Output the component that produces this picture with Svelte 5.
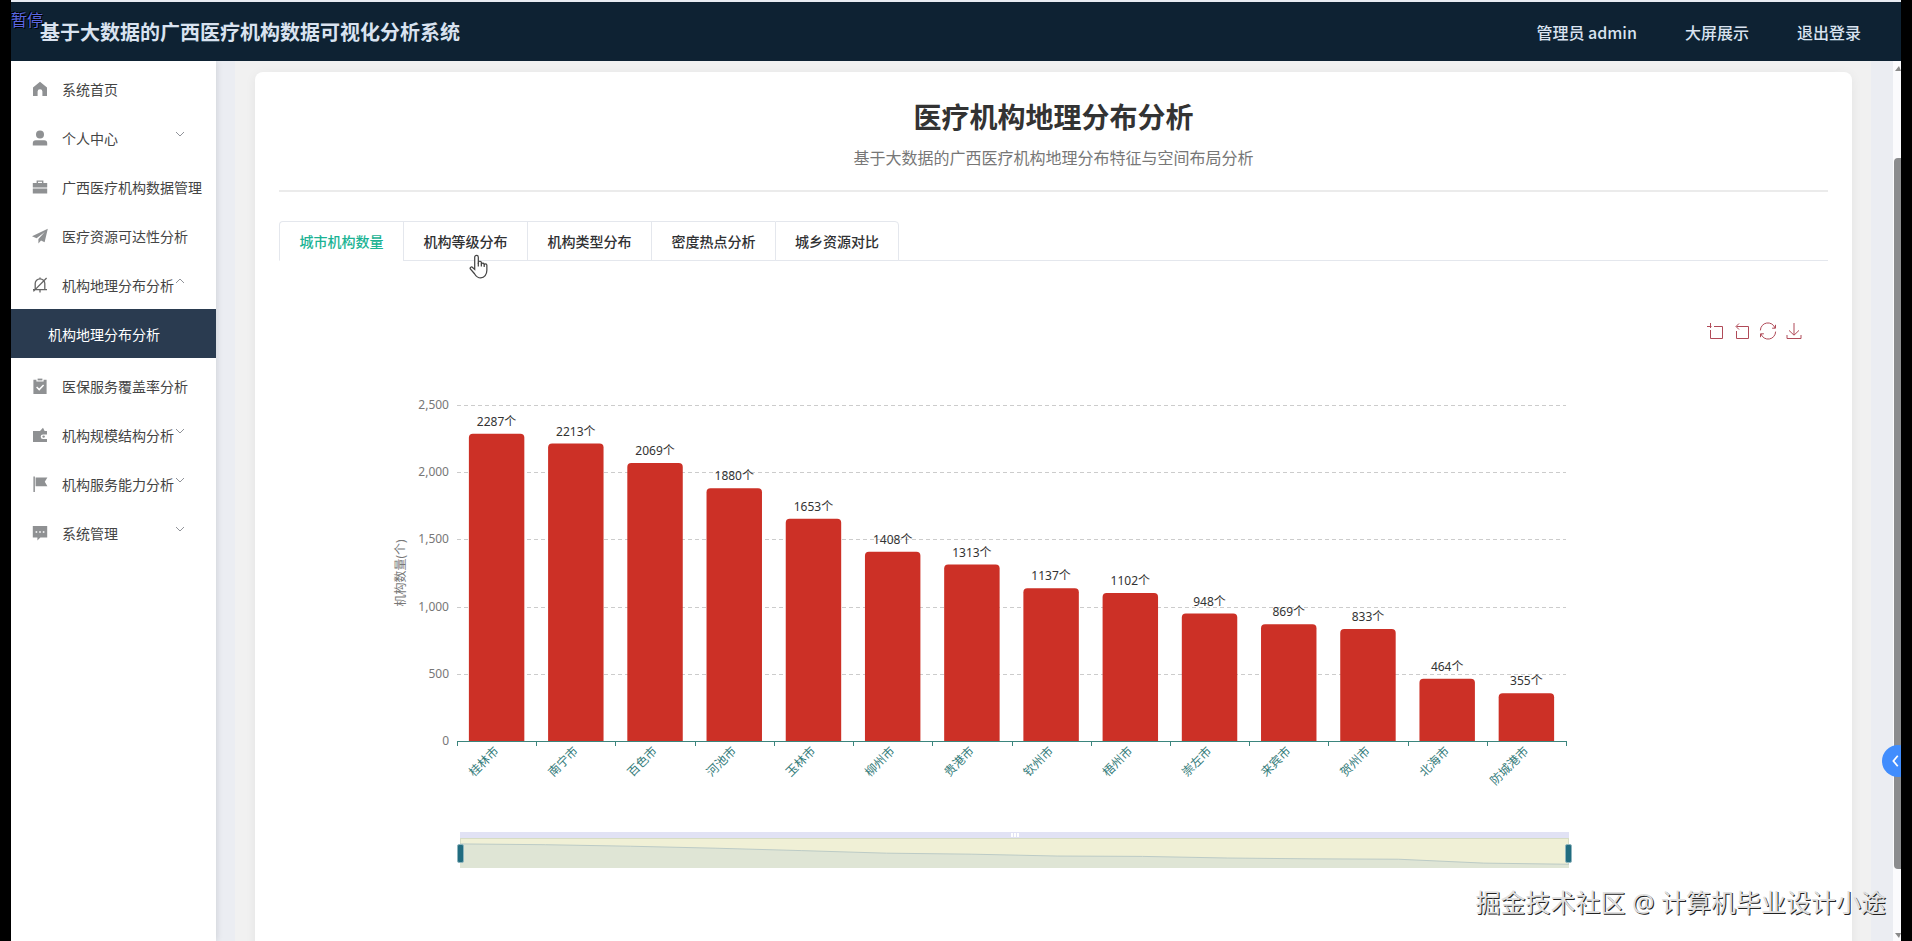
<script lang="ts">
	type MenuItem = {
		label: string;
		icon: string;
		arrow?: 'up' | 'down';
		children?: string[];
	};

	const menu: MenuItem[] = [
		{ label: '系统首页', icon: 'home' },
		{ label: '个人中心', icon: 'user', arrow: 'down' },
		{ label: '广西医疗机构数据管理', icon: 'case' },
		{ label: '医疗资源可达性分析', icon: 'plane' },
		{ label: '机构地理分布分析', icon: 'bell', arrow: 'up', children: ['机构地理分布分析'] },
		{ label: '医保服务覆盖率分析', icon: 'claim' },
		{ label: '机构规模结构分析', icon: 'wallet', arrow: 'down' },
		{ label: '机构服务能力分析', icon: 'flag', arrow: 'down' },
		{ label: '系统管理', icon: 'chat', arrow: 'down' }
	];

	const tabs = ['城市机构数量', '机构等级分布', '机构类型分布', '密度热点分析', '城乡资源对比'];
	let activeTab = $state(0);

	const cities = [
		{ name: '桂林市', count: 2287 },
		{ name: '南宁市', count: 2213 },
		{ name: '百色市', count: 2069 },
		{ name: '河池市', count: 1880 },
		{ name: '玉林市', count: 1653 },
		{ name: '柳州市', count: 1408 },
		{ name: '贵港市', count: 1313 },
		{ name: '钦州市', count: 1137 },
		{ name: '梧州市', count: 1102 },
		{ name: '崇左市', count: 948 },
		{ name: '来宾市', count: 869 },
		{ name: '贺州市', count: 833 },
		{ name: '北海市', count: 464 },
		{ name: '防城港市', count: 355 }
	];

	const ticks = [0, 500, 1000, 1500, 2000, 2500];
	const maxValue = 2500;
	const grid = { left: 178, right: 262, top: 44, height: 336 };
	const baseline = grid.top + grid.height;

	let chartWidth = $state(1549);
	const plotWidth = $derived(chartWidth - grid.left - grid.right);
	const step = $derived(plotWidth / cities.length);
	const barWidth = $derived(step * 0.7);

	const yOf = (v: number) => baseline - (v / maxValue) * grid.height;

	function barPath(cx: number, value: number) {
		const x = cx - barWidth / 2;
		const y = yOf(value);
		const r = 4;
		return `M${x} ${baseline}V${y + r}a${r} ${r} 0 0 1 ${r} ${-r}h${barWidth - 2 * r}a${r} ${r} 0 0 1 ${r} ${r}V${baseline}z`;
	}

	// shadow of the data inside the zoom slider
	const zoomHeight = 30;
	const shadowLine = $derived(
		cities
			.map((c, i) => {
				const x = (i / (cities.length - 1)) * plotWidth;
				const y = zoomHeight - (c.count / 2850) * zoomHeight;
				return `${x},${y}`;
			})
			.join(' ')
	);

	let zoomStart = $state(0);
	let zoomEnd = $state(100);
</script>

<svelte:head>
	<title>基于大数据的广西医疗机构数据可视化分析系统</title>
</svelte:head>

{#snippet menuIcon(name: string)}
	<svg class="menu-icon" viewBox="0 0 16 16" aria-hidden="true">
		{#if name === 'home'}
			<path d="M8 .8 1 6.4V15h4.6v-4.4a2.4 2.4 0 0 1 4.8 0V15H15V6.4z" />
		{:else if name === 'user'}
			<circle cx="8" cy="4.6" r="4" />
			<path d="M.8 15.4v-2.2a3 3 0 0 1 3-3h8.4a3 3 0 0 1 3 3v2.2z" />
		{:else if name === 'case'}
			<path d="M4.6 4V1.4h6.8V4h3.8v4.4H.8V4zm1.4 0h4V2.8H6zM.8 9.6h14.4v5H.8z" />
		{:else if name === 'plane'}
			<path d="M15.8.8 0 8.2l4.6 2L12.8 4l-6.4 7v4.4l2.6-3 3.6 1.8z" />
		{:else if name === 'bell'}
			<path
				class="line"
				d="M3.2 12V6.6a4.8 4.8 0 0 1 9.6 0V12M1 12.6h14M8 13v2.4M8 .4v1.4M14.6 1 1.4 14.4"
			/>
		{:else if name === 'claim'}
			<path d="M1.4 1.8h3V3.4h7.2V1.8h3V16H1.4z" />
			<path d="M5.6.6h4.8v1.8H5.6z" />
			<path class="cut" d="m4.6 9 2.6 2.6L11.6 7" />
		{:else if name === 'wallet'}
			<path d="M1 4h7l3-3.2 1.6 3.2H15v3.4h-4a2.2 2.2 0 0 0 0 4.6h4v3H1z" />
			<circle cx="11.6" cy="9.6" r="1.2" />
		{:else if name === 'flag'}
			<path d="M1.4.4h1.5V16H1.4zM3.6 1.6h11.8l-2.6 4.2 2.6 4.4H3.6z" />
		{:else if name === 'chat'}
			<path d="M.8 1h14.4v11.6H8.4l-3 2.8v-2.8H.8z" />
			<path class="cut" d="M3.6 7h1.6M7.2 7h1.6M10.8 7h1.6" />
		{/if}
	</svg>
{/snippet}

<div class="screen">
	<header class="topbar">
		<span class="osd">暂停</span>
		<h1 class="brand">基于大数据的广西医疗机构数据可视化分析系统</h1>
		<nav class="topnav">
			<a href="#profile">管理员 admin</a>
			<a href="#screen">大屏展示</a>
			<a href="#logout">退出登录</a>
		</nav>
	</header>

	<div class="body">
		<nav class="sidebar">
			<ul>
				{#each menu as item (item.label)}
					<li>
						<a class="menu-item" href="#menu">
							{@render menuIcon(item.icon)}
							<span>{item.label}</span>
							{#if item.arrow}
								<svg class="arrow" class:up={item.arrow === 'up'} viewBox="0 0 10 10" aria-hidden="true">
									<path d="m1 3 4 4 4-4" />
								</svg>
							{/if}
						</a>
						{#if item.children}
							<ul class="submenu">
								{#each item.children as child (child)}
									<li><a class="submenu-item" href="#geo">{child}</a></li>
								{/each}
							</ul>
						{/if}
					</li>
				{/each}
			</ul>
		</nav>

		<main class="content">
			<div class="panel">
				<section class="card">
					<div class="card-head">
						<h2>医疗机构地理分布分析</h2>
						<p>基于大数据的广西医疗机构地理分布特征与空间布局分析</p>
					</div>

					<div class="tabs" role="tablist">
						{#each tabs as tab, i (tab)}
							<button
								class="tab"
								class:active={i === activeTab}
								role="tab"
								aria-selected={i === activeTab}
								onclick={() => (activeTab = i)}
							>
								{tab}
							</button>
						{/each}
					</div>

					<div class="toolbox">
						<button aria-label="区域缩放">
							<svg viewBox="0 0 16 16"><path d="M-1 3.500h4.500M2.500 0v5M2.500 7v8.500h12V3.500H6" /></svg>
						</button>
						<button aria-label="区域缩放还原">
							<svg viewBox="0 0 16 16"><path d="M5 .5 2 3.500l3 3M2.500 3.500h12v12h-12V8" /></svg>
						</button>
						<button aria-label="还原">
							<svg viewBox="0 0 16 16">
								<path d="M.4 7.400A7.500 7.500 0 0 1 15 5M15.600 8.600A7.500 7.500 0 0 1 1 11M15.500 1.800V5.200h-3.400M.5 14.200v-3.400h3.400" />
							</svg>
						</button>
						<button aria-label="保存为图片">
							<svg viewBox="0 0 16 16"><path d="M8 0v12M3 7.4l5 4.8 5-4.8M1 12v3.500h14V12" /></svg>
						</button>
					</div>

					<div class="chart" bind:clientWidth={chartWidth}>
						<svg class="plot" width={chartWidth} height="460" role="img" aria-label="城市机构数量">
							{#each ticks as t (t)}
								{#if t > 0}
									<line
										class="split"
										x1={grid.left}
										x2={chartWidth - grid.right}
										y1={Math.round(yOf(t)) + 0.5}
										y2={Math.round(yOf(t)) + 0.5}
									/>
								{/if}
								<text class="y-label" x={grid.left - 8} y={yOf(t) + 4}>{t.toLocaleString('en-US')}</text>
							{/each}

							<text class="axis-name" transform="translate(126 {grid.top + grid.height / 2}) rotate(-90)">
								机构数量(个)
							</text>

							{#each cities as c, i (c.name)}
								{@const cx = grid.left + step * (i + 0.5)}
								<path class="bar" d={barPath(cx, c.count)} />
								<text class="value" x={cx} y={yOf(c.count) - 8}>{c.count}个</text>
								<text class="x-label" transform="translate({cx} {baseline + 8}) rotate(-45)" y="4">
									{c.name}
								</text>
							{/each}

							<path class="axis" d="M{grid.left} {baseline + 0.5}h{plotWidth}" />
							{#each { length: cities.length + 1 } as _, i}
								<path class="axis" d="M{Math.round(grid.left + step * i) + 0.5} {baseline}v5" />
							{/each}
						</svg>

						<div class="zoom">
							<div class="zoom-move"><span class="grip"></span></div>
							<div class="zoom-track">
								<svg width={plotWidth} height={zoomHeight} aria-hidden="true">
									<polygon points="0,{zoomHeight} {shadowLine} {plotWidth},{zoomHeight}" />
									<polyline points={shadowLine} />
								</svg>
								<input type="range" aria-label="起始位置" bind:value={zoomStart} />
								<input type="range" aria-label="结束位置" bind:value={zoomEnd} />
							</div>
						</div>
					</div>
				</section>
			</div>
		</main>

		<div class="scrollbar" aria-hidden="true">
			<span class="scroll-up"></span>
			<span class="scroll-thumb"></span>
			<span class="scroll-down"></span>
		</div>
	</div>

	<button class="float-btn" aria-label="展开">
		<svg viewBox="0 0 16 16"><path d="M10 2 5 8l5 6" /></svg>
	</button>

	<span class="watermark">掘金技术社区 @ 计算机毕业设计小途</span>

	<svg class="cursor" viewBox="0 0 20 26" aria-hidden="true">
		<path
			d="M6 16V3.2a1.9 1.9 0 0 1 3.8 0V10v-1.4a1.7 1.7 0 0 1 3.2 0V10.6a1.6 1.6 0 0 1 3 0v1a1.4 1.4 0 0 1 2.8 0V17c0 4.6-2.6 8-6.4 8-3.4 0-5-1.6-6.6-4.4L1.4 15.6c-.8-1.6 1.2-2.8 2.4-1.6z"
		/>
		<path d="M9.8 9v4M13 10v3M16 11v2.4" />
	</svg>
</div>

<style>
	:global(body) {
		background: #000;
		font-family: 'Noto Sans', 'Noto Sans CJK SC', sans-serif;
		color: #333;
	}

	.screen {
		position: relative;
		display: flex;
		flex-direction: column;
		height: 100vh;
		margin: 0 11px;
		box-sizing: border-box;
		border-top: 2px solid #e8ecf2;
		background: #fff;
		overflow: hidden;
	}

	ul {
		list-style: none;
		margin: 0;
		padding: 0;
	}

	a {
		color: inherit;
		text-decoration: none;
	}

	button {
		font: inherit;
		cursor: pointer;
	}

	.topbar {
		position: relative;
		display: flex;
		align-items: center;
		justify-content: space-between;
		height: 59px;
		flex-shrink: 0;
		padding: 0 40px 0 29px;
		background: #0e2233;
		color: #d9e3f0;
	}

	.osd {
		position: absolute;
		left: 0;
		top: 8px;
		font-size: 16px;
		line-height: 20px;
		color: #5a68e0;
		text-shadow:
			1px 1px 0 #000,
			-1px -1px 0 #000;
	}

	.brand {
		margin: 0;
		font-size: 20px;
		font-weight: bold;
	}

	.topnav {
		display: flex;
		gap: 48px;
		font-family: 'Noto Sans CJK SC', sans-serif;
		font-size: 16px;
		font-weight: 500;
	}

	.body {
		display: flex;
		flex: 1;
		min-height: 0;
		background: #ebedf2;
	}

	.sidebar {
		width: 205px;
		flex-shrink: 0;
		padding-top: 3px;
		box-sizing: border-box;
		background: #fff;
		box-shadow: 1px 0 6px rgba(0, 21, 41, 0.12);
	}

	.menu-item {
		display: flex;
		align-items: center;
		height: 49px;
		padding-left: 21px;
		font-size: 14px;
		color: #444;
		white-space: nowrap;
		position: relative;
	}

	.menu-icon {
		width: 16px;
		height: 16px;
		margin-right: 14px;
		fill: #8f9193;
	}

	.menu-icon .line {
		fill: none;
		stroke: #666;
		stroke-width: 1.3;
	}

	.menu-icon .cut {
		fill: none;
		stroke: #fff;
		stroke-width: 1.5;
	}

	.arrow {
		position: absolute;
		right: 31px;
		top: 16px;
		width: 10px;
		height: 10px;
		fill: none;
		stroke: #909399;
	}

	.arrow.up {
		transform: rotate(180deg);
	}

	.submenu {
		padding-bottom: 3px;
	}

	.submenu-item {
		display: flex;
		align-items: center;
		height: 49px;
		padding-left: 37px;
		background: #2a3b50;
		color: #fff;
		font-size: 14px;
	}

	.content {
		flex: 1;
		min-width: 0;
		padding: 0 22px 0 19px;
		overflow: hidden;
	}

	.panel {
		min-height: 100%;
		box-sizing: border-box;
		padding: 11px 19px 0 20px;
		background: #f1f1f1;
	}

	.card {
		min-height: 900px;
		box-sizing: border-box;
		padding: 24px;
		border-radius: 8px;
		background: #fff;
		box-shadow: 0 2px 12px rgba(0, 0, 0, 0.06);
	}

	.card-head {
		padding-bottom: 20px;
		border-bottom: 2px solid #ebebeb;
		text-align: center;
	}

	.card-head h2 {
		margin: 0 0 8px;
		font-size: 28px;
		line-height: 42px;
		font-weight: bold;
	}

	.card-head p {
		margin: 0;
		font-size: 16px;
		line-height: 24px;
		color: #777;
	}

	.tabs {
		display: flex;
		height: 39px;
		margin-top: 29px;
		border-bottom: 1px solid #e4e7ed;
	}

	.tab {
		width: 124px;
		height: 40px;
		padding: 0;
		border: 1px solid #e4e7ed;
		border-right: 0;
		background: #fff;
		font-family: 'Noto Sans CJK SC', sans-serif;
		font-size: 14px;
		font-weight: 500;
		color: #303133;
	}

	.tab:first-child {
		border-top-left-radius: 4px;
	}

	.tab:last-child {
		border-right: 1px solid #e4e7ed;
		border-top-right-radius: 4px;
	}

	.tab.active {
		color: #1bb394;
		border-bottom-color: #fff;
	}

	.toolbox {
		display: flex;
		justify-content: flex-end;
		gap: 10px;
		margin: 62px 26px 0 0;
	}

	.toolbox button {
		width: 16px;
		height: 16px;
		padding: 0;
		border: 0;
		background: none;
	}

	.toolbox svg {
		display: block;
		width: 16px;
		height: 16px;
		fill: none;
		stroke: #b04a58;
		overflow: visible;
	}

	.chart {
		margin-top: 22px;
		overflow: hidden;
	}

	.plot {
		display: block;
		font-size: 12px;
	}

	.split {
		stroke: #ccc;
		stroke-dasharray: 4 3;
	}

	.y-label {
		text-anchor: end;
		fill: #777;
	}

	.axis-name {
		text-anchor: middle;
		fill: #777;
	}

	.bar {
		fill: #cc3026;
	}

	.value {
		text-anchor: middle;
		fill: #333;
	}

	.x-label {
		text-anchor: end;
		fill: #337b79;
	}

	.axis {
		fill: none;
		stroke: #3b857d;
	}

	.zoom {
		margin: 11px 259px 0 181px;
	}

	.zoom-move {
		display: flex;
		align-items: center;
		justify-content: center;
		height: 6px;
		background: #e1e2f4;
	}

	.grip {
		width: 8px;
		height: 4px;
		background: repeating-linear-gradient(90deg, #fff 0 2px, transparent 2px 3px);
	}

	.zoom-track {
		position: relative;
		height: 30px;
		background: #f0f0d6;
		box-shadow: inset 0 0 0 1px #d6dcc4;
	}

	.zoom-track svg {
		display: block;
		width: 100%;
	}

	.zoom-track polygon {
		fill: #dfe5d5;
	}

	.zoom-track polyline {
		fill: none;
		stroke: #bccbc6;
	}

	.zoom-track input {
		position: absolute;
		left: -3px;
		top: 0;
		width: calc(100% + 6px);
		height: 30px;
		margin: 0;
		appearance: none;
		background: none;
		pointer-events: none;
	}

	.zoom-track input::-webkit-slider-thumb {
		appearance: none;
		width: 7px;
		height: 19px;
		border: 1px solid #8fb5bd;
		border-radius: 2px;
		background: #216c80;
		pointer-events: auto;
	}

	.scrollbar {
		display: flex;
		flex-direction: column;
		align-items: flex-end;
		width: 8px;
		padding: 5px 0 3px;
		background: #fbfbfd;
	}

	.scroll-up,
	.scroll-down {
		border: 4px solid transparent;
		border-right-width: 2px;
	}

	.scroll-up {
		border-top: 0;
		border-bottom: 5px solid #8a8a8a;
	}

	.scroll-down {
		border-bottom: 0;
		border-top: 5px solid #8a8a8a;
	}

	.scroll-thumb {
		width: 7px;
		flex: 1;
		margin: 87px 0 64px;
		border-radius: 4px 0 0 4px;
		background: #8b8c8e;
	}

	.float-btn {
		position: absolute;
		right: -13px;
		bottom: 164px;
		width: 32px;
		height: 32px;
		padding: 0 0 0 7px;
		border: 0;
		border-radius: 50%;
		background: #418dfd;
	}

	.float-btn svg {
		display: block;
		width: 14px;
		height: 14px;
		fill: none;
		stroke: #fff;
		stroke-width: 2;
	}

	.watermark {
		position: absolute;
		right: 15px;
		bottom: 22px;
		font-size: 25px;
		line-height: 34px;
		color: #e0e0e0;
		text-shadow: 1px 1px 0 #222;
		white-space: nowrap;
	}

	.cursor {
		position: absolute;
		left: 458px;
		top: 252px;
		width: 19px;
		height: 25px;
		fill: #fff;
		stroke: #444;
		stroke-width: 1.3;
	}
</style>
